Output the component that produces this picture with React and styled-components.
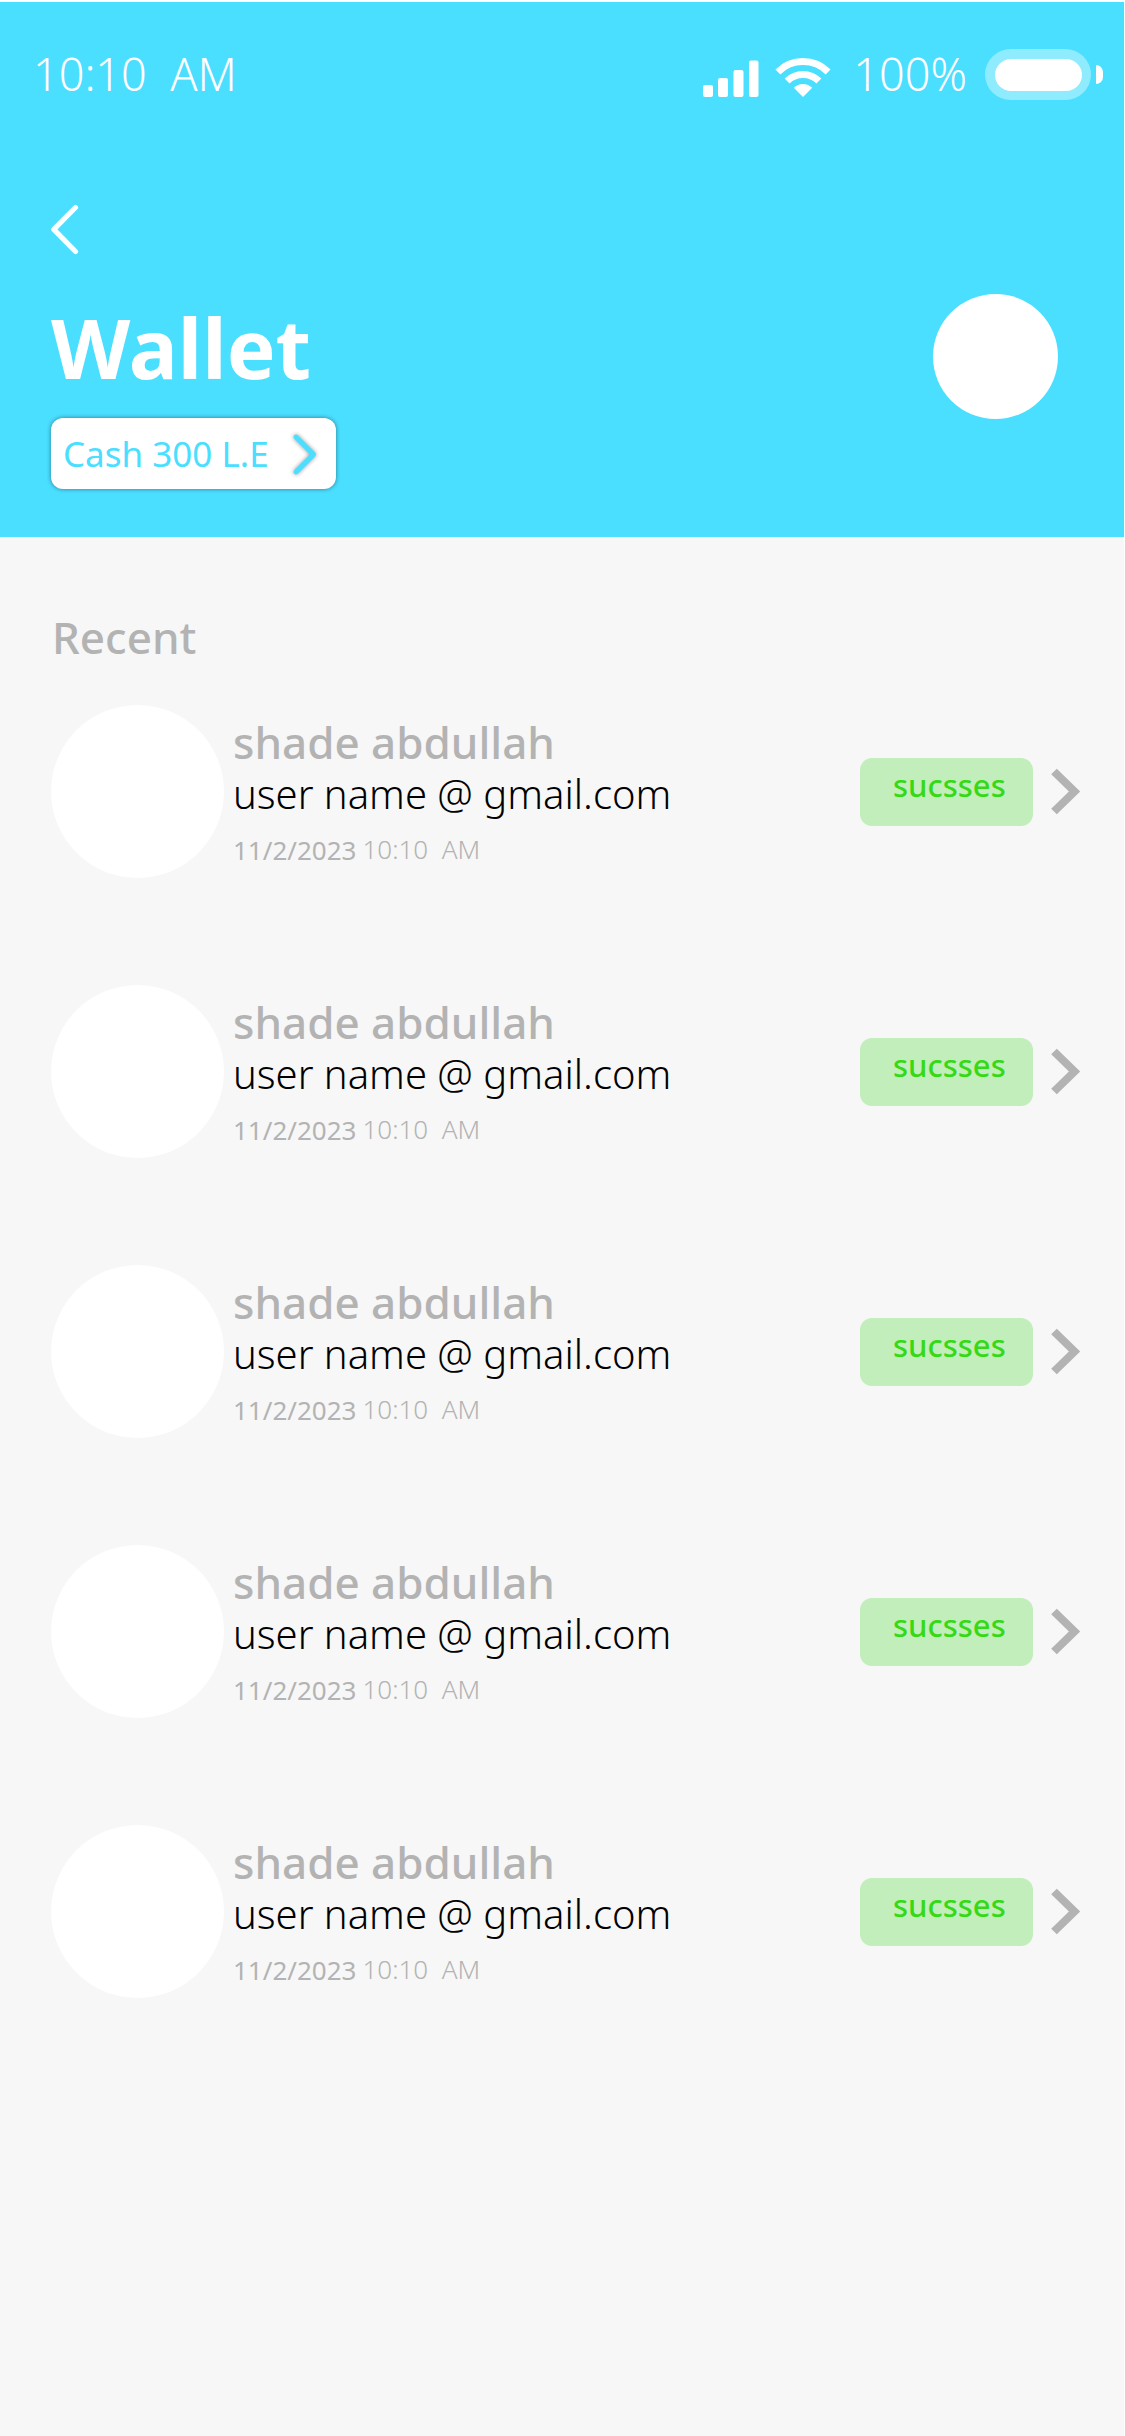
import React from "react";
import styled, {createGlobalStyle} from "styled-components";

const GlobalStyle = createGlobalStyle`
  * {
    box-sizing: border-box;
  }
  body {
    margin: 0;
    background-color: white;
    font-family: "Noto Sans", "Open Sans", sans-serif;
  }
`

const Screen = styled.div`
  width: 1124px;
  height: 2436px;
  padding-top: 2px;
  background: linear-gradient(white 2px, #f7f7f7 2px);
`

const Header = styled.header`
  height: 535px;
  background-color: #4adeff;
  color: white;
`

const StatusBar = styled.div`
  height: 144px;
  padding: 0px 21px 0px 33px;
  display: flex;
  align-items: center;
  justify-content: space-between;
`
const StatusGroup = styled.div`
  display: flex;
  align-items: center;
`

const Text = styled.span`
  display: block;
  white-space: pre;
  font-size: ${props => props.$size}px;
  font-weight: ${props => props.$weight || 400};
  line-height: ${props => props.$line}px;
  letter-spacing: ${props => props.$spacing || 0}px;
`

const Signal = styled.svg`
  display: block;
  margin: 9px 16px 0px 0px;
`
const Wifi = styled.svg`
  display: block;
  margin: 7px 22px 0px 0px;
`
const Battery = styled.div`
  width: 106px;
  height: 51px;
  margin-left: 18px;
  padding: 10px 9px 9px 10px;
  border-radius: 26px;
  background-color: #8febfe;
`
const BatteryLevel = styled.div`
  height: 32px;
  border-radius: 16px;
  background-color: white;
`
const BatteryTip = styled.div`
  width: 7px;
  height: 19px;
  margin-left: 5px;
  border-radius: 0px 10px 10px 0px;
  background-color: white;
`

const BackButton = styled.button`
  display: block;
  margin: 58px 0px 0px 51px;
  padding: 0px;
  border: none;
  background: none;
  color: inherit;
`
const HeaderRow = styled.div`
  display: flex;
  justify-content: space-between;
  padding: 39px 66px 0px 51px;
`
const Title = styled.h1`
  margin: 0px;
  font-size: 82px;
  font-weight: 700;
  line-height: 106px;
  letter-spacing: 0px;
`
const CashButton = styled.button`
  display: flex;
  align-items: center;
  justify-content: space-between;
  width: 285px;
  height: 71px;
  margin: 18px 0px 0px 0px;
  padding: 0px 17px 0px 12px;
  border: none;
  border-radius: 12px;
  background-color: white;
  box-shadow: 0px 0px 4px rgba(0, 0, 0, 0.45);
  color: #4adeff;
  font-family: inherit;
`
const CashIcon = styled.svg`
  filter: drop-shadow(0px 0px 2px rgba(0, 0, 0, 0.45));
`
const Picture = styled.div`
  width: ${props => props.$size}px;
  height: ${props => props.$size}px;
  border-radius: 50%;
  background-color: white;
`

const Recent = styled.h2`
  margin: 0px 0px 38px 1px;
  color: #b3b3b3;
  font-size: 44px;
  font-weight: 500;
  line-height: 60px;
`
const Main = styled.main`
  padding: 70px 43px 0px 51px;
`
const List = styled.ul`
  margin: 0px;
  padding: 0px;
  list-style: none;
  display: flex;
  flex-direction: column;
  gap: 107px;
`
const Item = styled.li`
  height: 173px;
  display: flex;
  align-items: center;
`
const Info = styled.div`
  flex: 1;
  align-self: stretch;
  padding: 8px 0px 0px 9px;
  color: #b3b3b3;
`
const Email = styled(Text)`
  color: black;
`
const When = styled.div`
  display: flex;
  gap: 6px;
`
const Status = styled.div`
  width: 173px;
  height: 68px;
  margin-right: 18px;
  padding: 7px 0px 0px 33px;
  border-radius: 12px;
  background-color: #c2eebb;
  color: #36d916;
`

const transactions = [1, 2, 3, 4, 5].map(id => ({
    id,
    name: "shade abdullah",
    email: "user name @ gmail.com",
    date: "11/2/2023",
    time: "10:10  AM",
    status: "sucsses",
}))

const Transaction = ({item}) => (
    <Item>
        <Picture $size={173}/>
        <Info>
            <Text $size={44} $weight={500} $line={58}>{item.name}</Text>
            <Email $size={40} $weight={300} $line={46}>{item.email}</Email>
            <When>
                <Text $size={26} $weight={400} $line={66}>{item.date}</Text>
                <Text $size={26} $weight={300} $line={64}>{item.time}</Text>
            </When>
        </Info>
        <Status>
            <Text $size={31} $weight={500} $line={40}>{item.status}</Text>
        </Status>
        <svg width="30" height="47" viewBox="0 0 30 47" fill="none" stroke="#b3b3b3" strokeWidth="8">
            <path d="M3 3.5 L23.5 23.5 L3 43.5"/>
        </svg>
    </Item>
)

const App = () => {
    return (
        <>
            <GlobalStyle/>
            <Screen>
                <Header>
                    <StatusBar>
                        <Text $size={45} $weight={300} $line={60}>10:10  AM</Text>
                        <StatusGroup>
                            <Signal width="56" height="37" fill="currentColor">
                                <rect x="0" y="25" width="10" height="12" rx="2"/>
                                <rect x="15" y="18" width="10" height="19" rx="2"/>
                                <rect x="30.5" y="10" width="10" height="27" rx="2"/>
                                <rect x="46" y="0.5" width="9.5" height="36.5" rx="2"/>
                            </Signal>
                            <Wifi width="56" height="39" fill="none" stroke="currentColor" strokeWidth="7">
                                <path d="M2.9 13.9 A35.5 35.5 0 0 1 53.1 13.9"/>
                                <path d="M12.1 23.1 A22.5 22.5 0 0 1 43.9 23.1"/>
                                <path d="M28 39 L18.8 29.8 A13 13 0 0 1 37.2 29.8 Z" fill="currentColor" stroke="none"/>
                            </Wifi>
                            <Text $size={45} $weight={300} $line={60}>100%</Text>
                            <Battery>
                                <BatteryLevel/>
                            </Battery>
                            <BatteryTip/>
                        </StatusGroup>
                    </StatusBar>
                    <BackButton aria-label="Back">
                        <svg width="28" height="51" viewBox="0 0 28 51" fill="none" stroke="currentColor" strokeWidth="5.2" strokeLinecap="round" strokeLinejoin="round" display="block">
                            <path d="M24.5 3.5 L2.8 25.4 L24.5 47.5"/>
                        </svg>
                    </BackButton>
                    <HeaderRow>
                        <div>
                            <Title>Wallet</Title>
                            <CashButton>
                                <Text $size={35} $weight={400} $line={48}>Cash 300 L.E</Text>
                                <CashIcon width="28" height="44" viewBox="0 0 28 44" fill="none" stroke="currentColor" strokeWidth="4.6" strokeLinecap="round" strokeLinejoin="round">
                                    <path d="M5 5 L22.5 22.5 L5 40"/>
                                </CashIcon>
                            </CashButton>
                        </div>
                        <Picture $size={125}/>
                    </HeaderRow>
                </Header>
                <Main>
                    <Recent>Recent</Recent>
                    <List>
                        {transactions.map(item => (
                            <Transaction key={item.id} item={item}/>
                        ))}
                    </List>
                </Main>
            </Screen>
        </>
    )
}

export default App
